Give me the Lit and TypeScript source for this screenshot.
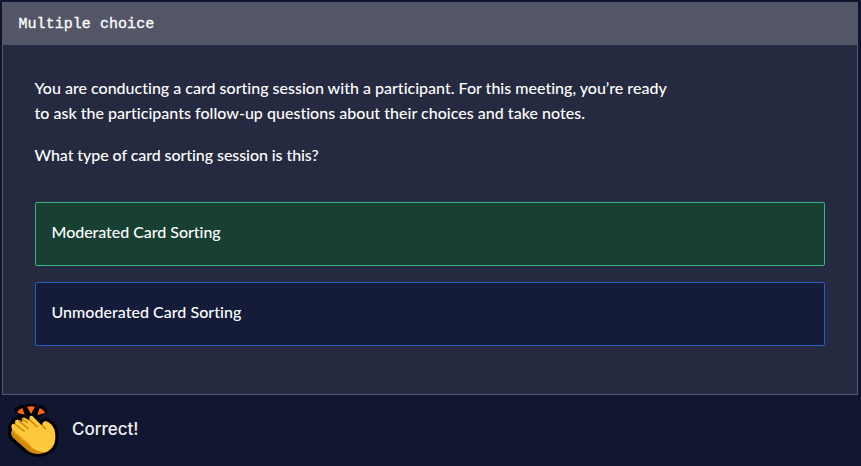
import { LitElement, html, css } from "lit";
import { customElement, property } from "lit/decorators.js";

@customElement("answer-option")
class AnswerOption extends LitElement {
  @property() label = "";
  @property({ type: Boolean, reflect: true }) correct = false;

  static styles = css`
    :host {
      display: flex;
      align-items: center;
      box-sizing: border-box;
      height: 64px;
      padding: 0 15.5px 5px;
      border: 1px solid #2b59c6;
      border-radius: 2px;
      background: #141c3a;
      color: #fff;
      letter-spacing: 0.03px;
      font-variant-ligatures: none;
    }
    :host([correct]) {
      border-color: #37b387;
      background: #174033;
      letter-spacing: -0.04px;
    }
  `;

  render() {
    return html`<span>${this.label}</span>`;
  }
}

@customElement("clap-icon")
class ClapIcon extends LitElement {
  static styles = css`
    :host { display: block; width: 56px; height: 60px; margin-top: 6px; }
    svg { display: block; }
  `;

  render() {
    return html`<svg width="56" height="60" viewBox="15 18 168 180" aria-hidden="true">
      <g fill="#000" stroke="#000" stroke-width="20" stroke-linejoin="round">
        <path d="M54 46L66 40L72 56ZM83 36H102L93 53ZM121 40L131 47L114 57Z"/>
        <path d="M35 101Q31 91 43 88Q41 75 55 75Q60 63 72 68L83 74Q82 59 96 64L127 93L128 86Q131 76 143 81Q155 87 162 102Q170 136 157 157Q142 177 110 175Q88 173 73 158L38 127Q31 117 35 111Z"/>
      </g>
      <g fill="#ff6418">
        <path d="M51 53Q55 43 67 39L74 59ZM81 35Q93 32 105 35L93 57ZM119 39Q131 43 136 54L112 60Z"/>
      </g>
      <path fill="#d28b00" d="M34 109Q40 104 48 109L101 151Q119 165 146 168Q129 179 107 176Q88 174 73 158L39 128Q31 118 34 109Z"/>
      <path fill="#ffc83d" d="M34 91Q40 84 48 88L45 84Q44 72 57 75L68 80L65 72Q68 65 76 69L90 78Q85 59 97 63L127 93L136 102L127 91Q126 78 139 79Q155 86 163 102Q172 136 157 157Q146 173 127 171Q105 168 90 153L39 109Q33 101 34 91Z"/>
      <g fill="none" stroke="#d28b00" stroke-width="4.5" stroke-linecap="round" stroke-linejoin="round">
        <path d="M45 87L73 109M56 77L84 100M67 71L82 83M88 73L111 95M127 91L137 101"/>
      </g>
      <path fill="none" stroke="#e7a51c" stroke-width="5" stroke-linecap="round" d="M38 106L91 151"/>
    </svg>`;
  }
}

@customElement("app-root")
class AppRoot extends LitElement {
  static styles = css`
    :host {
      display: block;
      box-sizing: border-box;
      height: 466px;
      padding: 2px 3px 0 2px;
      overflow: hidden;
      background: #10162f;
      color: #fff;
      font: 500 16px/25px Lato, "Liberation Sans", sans-serif;
      font-variant-ligatures: none;
    }
    .card {
      box-sizing: border-box;
      height: 393px;
      border: 1px solid #525666;
      background: #262a40;
    }
    header {
      box-sizing: border-box;
      height: 42px;
      padding: 9px 15.5px;
      background: #525666;
      font: 15px/25px "Liberation Mono", monospace;
      letter-spacing: 0.05px;
      -webkit-text-stroke: 0.3px #fff;
    }
    .body { padding: 30px 32px 0 31.5px; }
    p { margin: 0 0 17px; white-space: nowrap; }
    p span { display: block; width: max-content; }
    .first { letter-spacing: 0.005px; }
    .second { letter-spacing: 0.02px; }
    .question { letter-spacing: -0.07px; }
    .options { display: grid; gap: 16px; margin: 35px 0 0 0.5px; }
    footer { display: flex; align-items: center; height: 66px; padding-left: 3px; }
    .result { margin: 2px 0 0 11px; font: 500 17px/25px Inter, sans-serif; color: #f0f0f3; }
  `;

  render() {
    return html`
      <section class="card">
        <header><span class="title">Multiple choice</span></header>
        <div class="body">
          <p>
            <span class="first">You are conducting a card sorting session with a participant. For this meeting, you’re ready</span>
            <span class="second">to ask the participants follow-up questions about their choices and take notes.</span>
          </p>
          <p><span class="question">What type of card sorting session is this?</span></p>
          <div class="options">
            <answer-option label="Moderated Card Sorting" correct></answer-option>
            <answer-option label="Unmoderated Card Sorting"></answer-option>
          </div>
        </div>
      </section>
      <footer><clap-icon></clap-icon><span class="result">Correct!</span></footer>
    `;
  }
}
